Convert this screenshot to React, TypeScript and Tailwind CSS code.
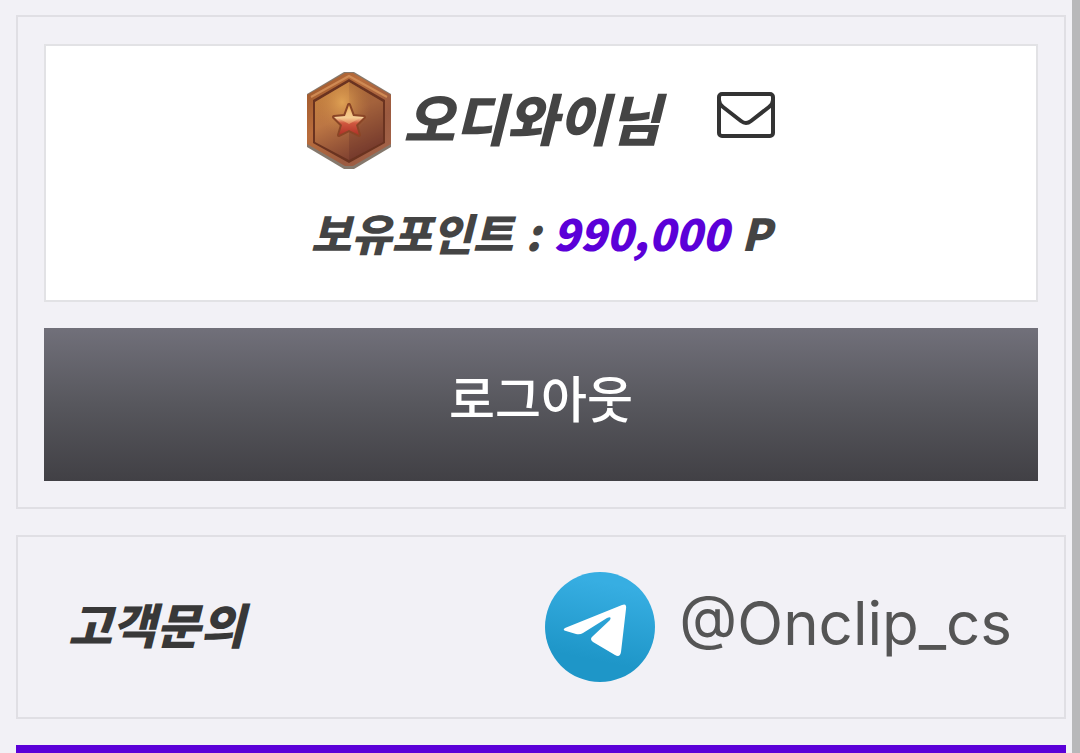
const user = { name: "오디와이", points: 990000 };
const contact = "@Onclip_cs";

const RankBadge = () => (
  <svg viewBox="0 0 84 98" className="h-[98px] w-[84px] shrink-0" aria-hidden="true">
    <defs>
      <linearGradient id="rim" x1="0" y1="0" x2="1" y2="1">
        <stop offset="0" stopColor="#9a5428" />
        <stop offset="0.35" stopColor="#b96d3c" />
        <stop offset="0.7" stopColor="#9b5a40" />
        <stop offset="1" stopColor="#a8684c" />
      </linearGradient>
      <linearGradient id="face" x1="0.2" y1="0" x2="0.6" y2="1">
        <stop offset="0" stopColor="#c4823c" />
        <stop offset="0.45" stopColor="#bc7644" />
        <stop offset="1" stopColor="#7c3e2f" />
      </linearGradient>
      <radialGradient id="shine" cx="0.4" cy="0.26" r="0.42">
        <stop offset="0" stopColor="#e3a656" stopOpacity="0.9" />
        <stop offset="1" stopColor="#c07a40" stopOpacity="0" />
      </radialGradient>
      <linearGradient id="star" x1="0" y1="0" x2="0" y2="1">
        <stop offset="0" stopColor="#e9a54c" />
        <stop offset="0.42" stopColor="#f6cf9a" />
        <stop offset="0.6" stopColor="#d0583f" />
        <stop offset="1" stopColor="#ae3127" />
      </linearGradient>
    </defs>
    <path d="M37 0h10l37 22v53L47 97H37L0 75V22z" fill="#85786c" />
    <path d="M38 1h8l38 22v49L46 94h-8L0 72V23z" fill="url(#rim)" />
    <path d="M4 25 42 4l38 21" fill="none" stroke="#cf8a54" strokeWidth="2" />
    <path d="M42 7 78 28v43L42 91 6 71V28z" fill="#6a3320" />
    <path d="M42 10 76 30v40L42 88 8 70V30z" fill="url(#face)" />
    <path d="M42 10 76 30v40L42 88V48z" fill="#5d2922" opacity="0.25" />
    <path d="M42 10 76 30v40L42 88 8 70V30z" fill="url(#shine)" />
    <path
      d="m42 33 4 11 11 1-8 8 3 10-10-5-10 5 3-10-8-8 11-1z"
      fill="url(#star)"
      stroke="#8a4526"
      strokeWidth="4"
      strokeLinejoin="round"
      paintOrder="stroke"
    />
    <path d="m42 36 3 9 8 1-11 6-11-6 8-1z" fill="#f5c98a" opacity="0.5" />
  </svg>
);

const Envelope = () => (
  <svg
    viewBox="0 0 58 46"
    className="h-[46px] w-[58px]"
    fill="none"
    stroke="#333"
    strokeWidth="4"
    strokeLinejoin="round"
    aria-hidden="true"
  >
    <rect x="2" y="2" width="54" height="42" rx="3" />
    <path d="M2 8Q2 12 6 15L24 29Q29 33 34 29L52 15Q56 12 56 8" />
  </svg>
);

const TelegramLogo = () => (
  <svg viewBox="0 0 110 110" className="size-[110px] shrink-0" aria-hidden="true">
    <defs>
      <linearGradient id="telegram" x1="0.6" y1="0" x2="0.4" y2="1">
        <stop offset="0.1" stopColor="#37aee2" />
        <stop offset="0.8" stopColor="#1e96c8" />
      </linearGradient>
    </defs>
    <circle cx="55" cy="55" r="55" fill="url(#telegram)" />
    <path
      d="M20 56 77 33Q82 31 81 37L76 80Q75 86 70 83L48 70Q44 67 48 64L65 48Q67 44 62 46L38 61Q35 63 31 62L21 59Q17 58 20 56z"
      fill="#fff"
    />
  </svg>
);

export default function App() {
  return (
    <div className="flex min-h-screen bg-[#f2f1f6] font-['Noto_Sans_CJK_KR',sans-serif] text-[#444]">
      <main className="flex min-w-0 flex-1 flex-col gap-[26px] pt-[15px] pr-[6px] pl-4">
        <section className="flex flex-col gap-[26px] border-2 border-[#e0dfe4] px-[26px] pt-[27px] pb-[26px]">
          <div className="flex flex-col items-center border-2 border-[#e2e2e5] bg-white pt-[26px] pb-9 font-black italic">
            <div className="flex items-center">
              <RankBadge />
              <h1 className="ml-3 pb-2 text-[56px] leading-[90px]">{user.name}님</h1>
              <button type="button" aria-label="쪽지" className="ml-14 pb-3">
                <Envelope />
              </button>
            </div>
            <p className="mt-[30px] flex gap-3 text-[44px] leading-[64px]">
              <span>보유포인트</span>
              <span>:</span>
              <strong className="font-black text-[#5b00d8]">
                {user.points.toLocaleString("en-US")}
              </strong>
              <span>P</span>
            </p>
          </div>
          <button
            type="button"
            className="bg-linear-to-b from-[#71707a] via-[#57575d] to-[#414045] pt-8 pb-[49px] text-[50px] leading-[72px] font-medium text-white"
          >
            로그아웃
          </button>
        </section>

        <section className="flex items-center justify-between border-2 border-[#e0dfe4] py-[35px] pr-[52px] pl-[50px]">
          <h2 className="pb-2 text-[48px] font-black text-[#383838] italic">고객문의</h2>
          <a
            href="https://t.me/Onclip_cs"
            className="flex items-center gap-6 font-[Inter,sans-serif] text-[60px] leading-[102px] text-[#555]"
          >
            <TelegramLogo />
            <span className="pb-2">{contact}</span>
          </a>
        </section>

        <div className="min-h-2 flex-1 bg-[#5b00d8]" />
      </main>
      <div className="w-2 shrink-0 bg-[#b8b8ba]" />
    </div>
  );
}
